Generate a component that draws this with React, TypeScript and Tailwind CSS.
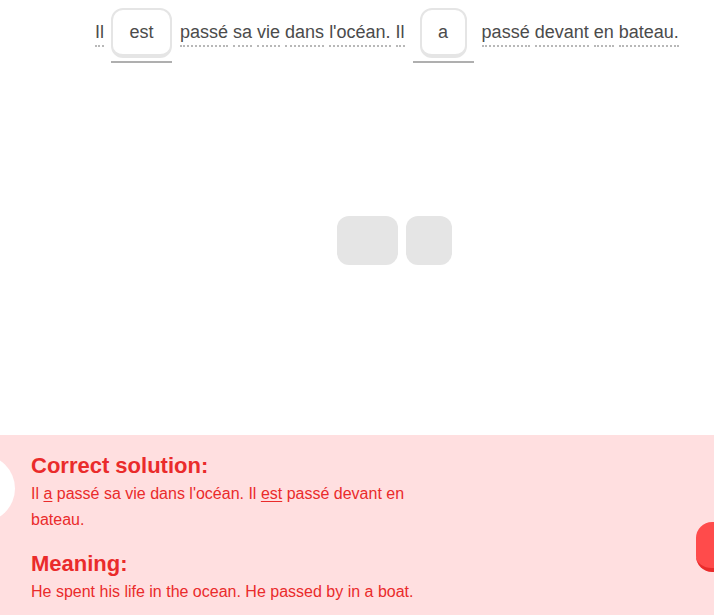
import React from "react";

const font = { fontFamily: '"Liberation Sans", Arial, sans-serif' };

const Words = ({ text }: { text: string }) => (
  <div className="flex gap-[5px] mt-[12px]">
    {text.split(" ").map((w, i) => (
      <span key={i} className="leading-[25px] border-b-2 border-dotted border-[#b8b8b8]">
        {w}
      </span>
    ))}
  </div>
);

const Slot = ({ word, slotW, boxW }: { word: string; slotW: string; boxW: string }) => (
  <div className={`flex flex-col items-center ${slotW}`}>
    <div className={`h-[50px] ${boxW} flex items-center justify-center rounded-xl border-2 border-b-4 border-[#e5e5e5] bg-white`}>
      {word}
    </div>
    <div className="mt-[3px] h-[2px] w-full bg-[#afafaf]" />
  </div>
);

export default function App() {
  return (
    <div className="w-[714px] h-[615px] overflow-hidden bg-white flex flex-col" style={font}>
      {/* Exercise area */}
      <div className="h-[435px] flex flex-col">
        <div className="flex items-start pt-[8px] pl-[95px] text-[18px] text-[#4b4b4b]">
          <Words text="Il" />
          <div className="ml-[7px] mr-[8px]">
            <Slot word="est" slotW="w-[61px]" boxW="w-[61px]" />
          </div>
          <Words text="passé sa vie dans l'océan. Il" />
          <div className="ml-[8px] mr-[8px]">
            <Slot word="a" slotW="w-[61px]" boxW="w-[47px]" />
          </div>
          <Words text="passé devant en bateau." />
        </div>

        {/* Empty word bank */}
        <div className="flex gap-[8px] pl-[337px] mt-[153px]">
          <div className="w-[61px] h-[49px] rounded-xl bg-[#e5e5e5]" />
          <div className="w-[46px] h-[49px] rounded-xl bg-[#e5e5e5]" />
        </div>
      </div>

      {/* Feedback panel */}
      <div className="flex-1 bg-[#ffdfe0] flex items-start overflow-hidden">
        <div className="shrink-0 w-[67px] h-[67px] rounded-full bg-white ml-[-52px] mt-[20px]" />
        <div className="ml-[16px] pt-[18px] w-[395px] text-[#ea2b2b]">
          <h2 className="text-[22px] leading-[26px] font-bold">Correct solution:</h2>
          <p className="mt-[2px] text-[16px] leading-[26px]">
            Il <span className="underline underline-offset-2">a</span> passé sa vie dans l'océan. Il{" "}
            <span className="underline underline-offset-2">est</span> passé devant en bateau.
          </p>
          <h2 className="mt-[18px] text-[22px] leading-[26px] font-bold">Meaning:</h2>
          <p className="mt-[2px] text-[16px] leading-[26px]">
            He spent his life in the ocean. He passed by in a boat.
          </p>
        </div>
        <div className="shrink-0 ml-auto mr-[-120px] mt-[87px] w-[138px] h-[50px] rounded-2xl bg-[#ff4b4b] border-b-4 border-[#ea2b2b]" />
      </div>
    </div>
  );
}
